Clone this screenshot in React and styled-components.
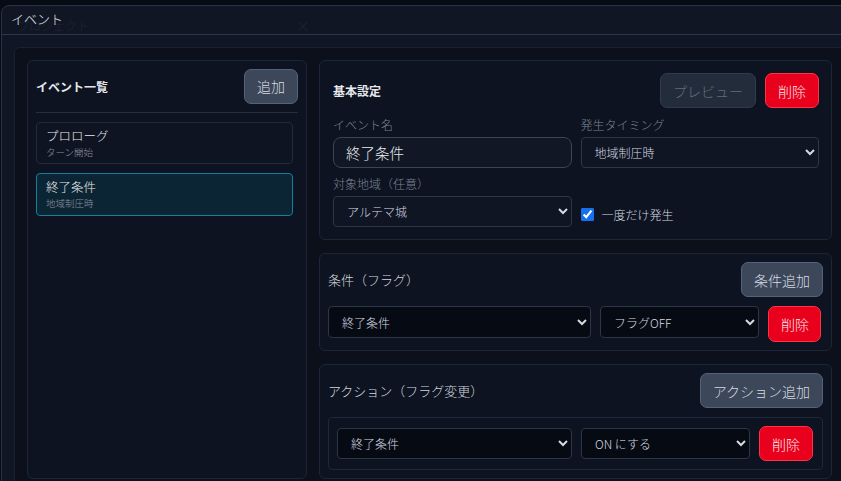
import React from 'react';
import styled, { createGlobalStyle, css } from 'styled-components';

const Global = createGlobalStyle`
  html, body { margin: 0; padding: 0; background: #070b13; overflow: hidden; }
  body {
    width: 841px; height: 481px;
    font-family: "Noto Sans CJK JP", "Noto Sans", sans-serif;
    font-weight: 300;
    color: #e5e7eb;
  }
  * { box-sizing: border-box; }
`;

const Modal = styled.div`
  margin: 5px 0 0 1px;
  width: 862px;
  height: 500px;
  background: #101624;
  border: 1px solid #27334a;
  border-radius: 8px;
  display: flex;
  flex-direction: column;
  position: relative;
  overflow: hidden;
`;

const Header = styled.div`
  height: 29px;
  flex: none;
  border-bottom: 1px solid #2a374d;
  display: flex;
  align-items: center;
  padding: 0 0 3px 9px;
  position: relative;
`;

const Title = styled.span`
  font-size: 13px;
  color: #e6e9ee;
  position: relative;
  z-index: 1;
`;

const Ghost = styled.span`
  position: absolute;
  top: ${p => p.$top}px;
  left: ${p => p.$left}px;
  font-size: ${p => p.$size}px;
  line-height: 1;
  color: #1f2736;
`;

const Body = styled.div`
  flex: 1;
  padding: 12px;
  display: flex;
`;

const Wrapper = styled.div`
  flex: 1;
  border: 1px solid #1a2232;
  border-radius: 6px;
  background: #0b101b;
  padding: 12px;
  display: grid;
  grid-template-columns: 280px 513px;
  column-gap: 12px;
  align-items: start;
`;

const Panel = styled.div`
  background: #0d1320;
  border: 1px solid #1d2637;
  border-radius: 6px;
  padding: ${p => p.$pad || '8px'};
`;

const LeftPanel = styled(Panel)`
  align-self: stretch;
  height: 419px;
`;

const Column = styled.div`
  display: flex;
  flex-direction: column;
  gap: 13px;
`;

const HeadRow = styled.div`
  height: 35px;
  display: flex;
  align-items: center;
  justify-content: space-between;
`;

const ListHead = styled(HeadRow)`
  height: 44px;
  padding-bottom: 9px;
  border-bottom: 1px solid #252f40;
`;

const BoldTitle = styled.span`
  font-size: 12px;
  font-weight: 700;
  color: #e5e7eb;
`;

const SectionTitle = styled.span`
  font-size: 13px;
  color: #d4d8df;
`;

const Btns = styled.div`
  display: flex;
  gap: 9px;
`;

const Button = styled.button`
  height: ${p => p.$h || 35}px;
  padding: 0 12px;
  border-radius: 7px;
  font-family: inherit;
  font-weight: 300;
  font-size: 14px;
  cursor: pointer;
  white-space: nowrap;
  ${p => p.$variant === 'danger' && css`
    background: #e8001c;
    border: 1px solid #ff3347;
    color: #fde9eb;
  `}
  ${p => p.$variant === 'secondary' && css`
    background: #3c4759;
    border: 1px solid #56627a;
    color: #d6dbe3;
  `}
  ${p => p.$variant === 'disabled' && css`
    background: #232c3b;
    border: 1px solid #313b4d;
    color: #636c7b;
  `}
`;

const List = styled.div`
  display: flex;
  flex-direction: column;
  gap: 9px;
  margin-top: 9px;
  padding-right: 5px;
`;

const Item = styled.div`
  border: 1px solid ${p => (p.$active ? '#11809c' : '#212b3c')};
  background: ${p => (p.$active ? '#0c2534' : '#0e1421')};
  border-radius: 4px;
  padding: 4px 9px ${p => (p.$active ? 5 : 4)}px;
  display: flex;
  flex-direction: column;
`;

const ItemTitle = styled.span`
  display: block;
  font-size: 12.5px;
  line-height: 18px;
  color: #e8eaee;
`;

const ItemSub = styled.span`
  display: block;
  font-size: 9.5px;
  line-height: 14px;
  color: #8a92a1;
`;

const Fields = styled.div`
  margin-top: 8px;
  display: grid;
  grid-template-columns: 1fr 1fr;
  column-gap: 9px;
  row-gap: 7px;
`;

const Field = styled.label`
  display: flex;
  flex-direction: column;
`;

const Label = styled.span`
  font-size: 12px;
  line-height: 17px;
  color: #7b8494;
  margin-bottom: 4px;
`;

const TextInput = styled.input`
  height: 31px;
  border: 1px solid #3a4558;
  border-radius: 8px;
  background: #111725;
  color: #e8eaee;
  font-family: inherit;
  font-weight: 300;
  font-size: 14.5px;
  padding: 0 12px;
  outline: none;
`;

const Select = styled.select`
  color-scheme: dark;
  height: ${p => p.$h || 31}px;
  border: 1px solid #2c3647;
  border-radius: 4px;
  background: ${p => (p.$dark ? '#060a13' : '#0f1523')};
  color: #d5d9e0;
  font-family: inherit;
  font-weight: 300;
  font-size: 12px;
  padding: 0 6px 0 9px;
  outline: none;
  width: 100%;
`;

const CheckRow = styled.label`
  align-self: end;
  height: 31px;
  display: flex;
  align-items: center;
  gap: 8px;
  padding-top: 5px;
  font-size: 12px;
  color: #d5d9e0;
`;

const Check = styled.input`
  margin: 0;
  width: 13px;
  height: 13px;
  accent-color: #1570ef;
  color-scheme: light;
`;

const Row = styled.div`
  margin-top: 9px;
  display: grid;
  grid-template-columns: ${p => p.$cols};
  column-gap: 9px;
  align-items: ${p => p.$align || 'start'};
`;

const InnerBox = styled.div`
  margin-top: 9px;
  border: 1px solid #1f2838;
  border-radius: 4px;
  background: #0d1320;
  padding: 8px;
`;

const InnerRow = styled(Row)`
  margin-top: 0;
`;

export default function App() {
  return (
    <>
      <Global />
      <Modal>
        <Header>
          <Ghost $top={14} $left={15} $size={12}>プロジェクト</Ghost>
          <Ghost $top={12} $left={294} $size={14}>×</Ghost>
          <Title>イベント</Title>
        </Header>
        <Body>
          <Wrapper>
            <LeftPanel>
              <ListHead>
                <BoldTitle>イベント一覧</BoldTitle>
                <Button $variant="secondary">追加</Button>
              </ListHead>
              <List>
                <Item>
                  <ItemTitle>プロローグ</ItemTitle>
                  <ItemSub>ターン開始</ItemSub>
                </Item>
                <Item $active>
                  <ItemTitle>終了条件</ItemTitle>
                  <ItemSub>地域制圧時</ItemSub>
                </Item>
              </List>
            </LeftPanel>

            <Column>
              <Panel $pad="12px 12px 12px 13px">
                <HeadRow>
                  <BoldTitle>基本設定</BoldTitle>
                  <Btns>
                    <Button $variant="disabled">プレビュー</Button>
                    <Button $variant="danger">削除</Button>
                  </Btns>
                </HeadRow>
                <Fields>
                  <Field>
                    <Label>イベント名</Label>
                    <TextInput defaultValue="終了条件" />
                  </Field>
                  <Field>
                    <Label>発生タイミング</Label>
                    <Select defaultValue="地域制圧時">
                      <option>ターン開始</option>
                      <option>地域制圧時</option>
                    </Select>
                  </Field>
                  <Field>
                    <Label>対象地域（任意）</Label>
                    <Select defaultValue="アルテマ城">
                      <option>アルテマ城</option>
                    </Select>
                  </Field>
                  <CheckRow>
                    <Check type="checkbox" defaultChecked />
                    一度だけ発生
                  </CheckRow>
                </Fields>
              </Panel>

              <Panel>
                <HeadRow>
                  <SectionTitle>条件（フラグ）</SectionTitle>
                  <Button $variant="secondary">条件追加</Button>
                </HeadRow>
                <Row $cols="263px 159px 53px">
                  <Select $dark $h={32} defaultValue="終了条件">
                    <option>終了条件</option>
                  </Select>
                  <Select $dark $h={32} defaultValue="フラグOFF">
                    <option>フラグON</option>
                    <option>フラグOFF</option>
                  </Select>
                  <Button $variant="danger" $h={36}>削除</Button>
                </Row>
              </Panel>

              <Panel>
                <HeadRow>
                  <SectionTitle>アクション（フラグ変更）</SectionTitle>
                  <Button $variant="secondary">アクション追加</Button>
                </HeadRow>
                <InnerBox>
                  <InnerRow $cols="235px 169px 54px" $align="center">
                    <Select $dark $h={31} defaultValue="終了条件">
                      <option>終了条件</option>
                    </Select>
                    <Select $dark $h={31} defaultValue="ON にする">
                      <option>ON にする</option>
                      <option>OFF にする</option>
                    </Select>
                    <Button $variant="danger">削除</Button>
                  </InnerRow>
                </InnerBox>
              </Panel>
            </Column>
          </Wrapper>
        </Body>
      </Modal>
    </>
  );
}
